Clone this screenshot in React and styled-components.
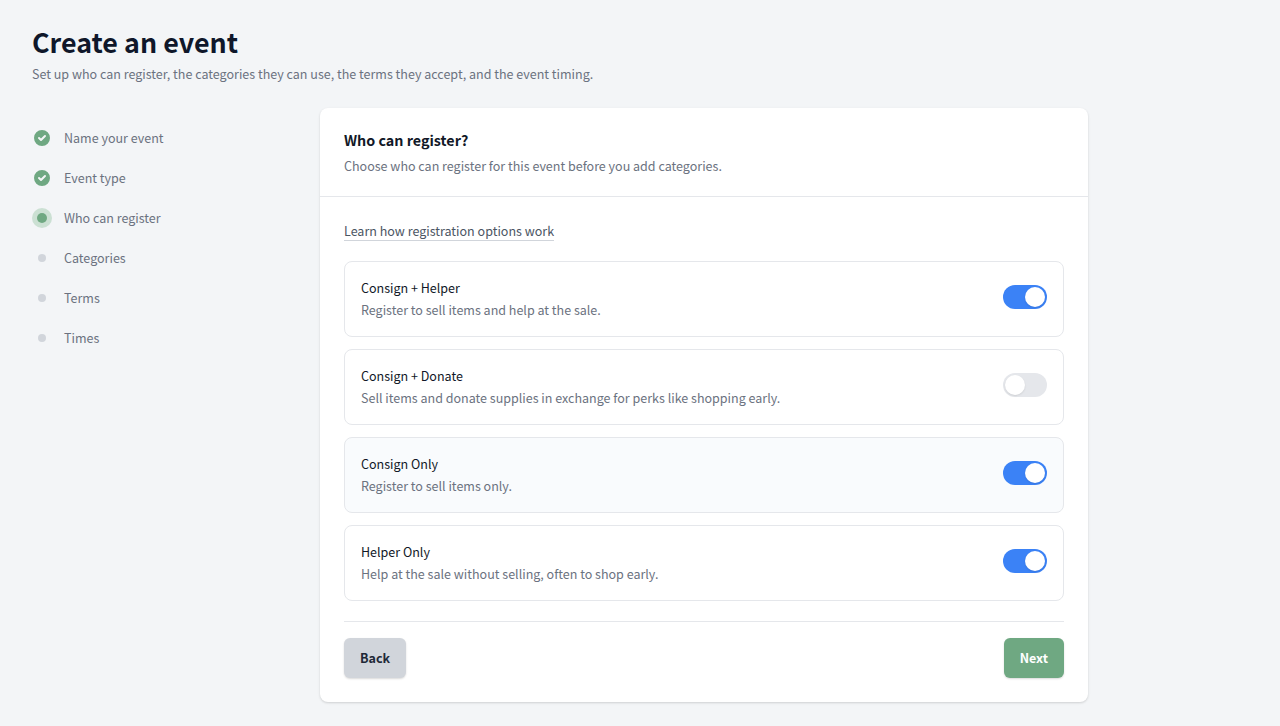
import React, { useState } from "react";
import styled, { createGlobalStyle } from "styled-components";

const GlobalStyle = createGlobalStyle`
  *, *::before, *::after { box-sizing: border-box; }
  body {
    margin: 0;
    background: #f3f5f7;
    color: #111827;
    font-family: "Noto Sans CJK JP", "Noto Sans", sans-serif;
    font-size: 14px;
    font-size-adjust: 0.486;
    line-height: 20px;
  }
  h1, h2, p, ol { margin: 0; padding: 0; }
  button { font: inherit; font-size-adjust: inherit; }
`;

const Page = styled.main`
  padding: 24px 32px;
`;

const Title = styled.h1`
  font-size: 30px;
  line-height: 36px;
  font-weight: 700;
  color: #0f172a;
`;

const Muted = styled.p`
  margin-top: 4px;
  color: #6b7280;
`;

const Layout = styled.div`
  display: grid;
  grid-template-columns: 256px minmax(0, 768px);
  gap: 32px;
  margin-top: 24px;
`;

const Steps = styled.ol`
  display: flex;
  flex-direction: column;
  gap: 20px;
  padding-top: 20px;
  list-style: none;
`;

const Step = styled.li`
  display: flex;
  align-items: center;
  gap: 12px;
  color: #6b7280;
`;

const Marker = styled.svg`
  flex: none;
  width: 20px;
  height: 20px;
`;

const Card = styled.section`
  background: #fff;
  border-radius: 8px;
  box-shadow: 0 1px 3px rgba(0, 0, 0, 0.1), 0 1px 2px rgba(0, 0, 0, 0.06);
`;

const CardHeader = styled.header`
  padding: 20px 24px;
  border-bottom: 1px solid #e5e7eb;
`;

const CardTitle = styled.h2`
  font-size: 16px;
  line-height: 24px;
  font-weight: 600;
`;

const CardBody = styled.div`
  display: flex;
  flex-direction: column;
  gap: 20px;
  padding: 24px;
`;

const HelpLink = styled.a`
  align-self: flex-start;
  height: 20px;
  color: #4b5563;
  border-bottom: 1px solid #d1d5db;
  text-decoration: none;
`;

const Options = styled.div`
  display: flex;
  flex-direction: column;
  gap: 12px;
`;

const Option = styled.label`
  display: flex;
  align-items: flex-start;
  justify-content: space-between;
  gap: 16px;
  padding: 16px;
  border: 1px solid #e5e7eb;
  border-radius: 8px;
  background: ${({ $active }) => ($active ? "#f9fbfd" : "#fff")};
  cursor: pointer;
`;

const OptionName = styled.span`
  display: block;
  color: #111827;
`;

const OptionNote = styled.span`
  display: block;
  margin-top: 2px;
  color: #6b7280;
`;

const Switch = styled.input`
  appearance: none;
  flex: none;
  width: 44px;
  height: 24px;
  margin: 7px 0 0;
  padding: 2px;
  border-radius: 12px;
  background: #e5e7eb;
  cursor: pointer;

  &::before {
    content: "";
    display: block;
    width: 20px;
    height: 20px;
    border-radius: 50%;
    background: #fff;
    box-shadow: 0 1px 2px rgba(0, 0, 0, 0.1);
  }
  &:checked { background: #3b82f6; }
  &:checked::before { margin-left: 20px; }
`;

const Footer = styled.footer`
  display: flex;
  justify-content: space-between;
  padding-top: 16px;
  border-top: 1px solid #e5e7eb;
`;

const Button = styled.button`
  height: 40px;
  padding: 0 16px;
  border: 0;
  border-radius: 6px;
  font-weight: 600;
  color: ${({ $primary }) => ($primary ? "#fff" : "#1f2937")};
  background: ${({ $primary }) => ($primary ? "#6fa882" : "#d1d5db")};
  box-shadow: 0 1px 2px rgba(0, 0, 0, 0.15);
  cursor: pointer;
`;

const STEPS = [
  ["Name your event", "done"],
  ["Event type", "done"],
  ["Who can register", "current"],
  ["Categories", "todo"],
  ["Terms", "todo"],
  ["Times", "todo"],
];

const OPTIONS = [
  { id: "consign-helper", name: "Consign + Helper", note: "Register to sell items and help at the sale.", on: true },
  { id: "consign-donate", name: "Consign + Donate", note: "Sell items and donate supplies in exchange for perks like shopping early.", on: false },
  { id: "consign-only", name: "Consign Only", note: "Register to sell items only.", on: true, active: true },
  { id: "helper-only", name: "Helper Only", note: "Help at the sale without selling, often to shop early.", on: true },
];

function StepMarker({ state }) {
  return (
    <Marker viewBox="0 0 20 20" aria-hidden="true">
      {state === "done" && (
        <path
          fill="#6fa882"
          fillRule="evenodd"
          d="M10 18a8 8 0 100-16 8 8 0 000 16zm3.707-9.293a1 1 0 00-1.414-1.414L9 10.586 7.707 9.293a1 1 0 00-1.414 1.414l2 2a1 1 0 001.414 0l4-4z"
        />
      )}
      {state === "current" && (
        <>
          <circle cx="10" cy="10" r="10" fill="#cbe0d3" />
          <circle cx="10" cy="10" r="5" fill="#6fa882" />
        </>
      )}
      {state === "todo" && <circle cx="10" cy="10" r="4" fill="#d1d5db" />}
    </Marker>
  );
}

function OptionRow({ option }) {
  const [on, setOn] = useState(option.on);
  return (
    <Option htmlFor={option.id} $active={option.active}>
      <span>
        <OptionName>{option.name}</OptionName>
        <OptionNote>{option.note}</OptionNote>
      </span>
      <Switch type="checkbox" role="switch" id={option.id} checked={on} onChange={() => setOn(!on)} />
    </Option>
  );
}

export default function App() {
  return (
    <Page>
      <GlobalStyle />
      <Title>Create an event</Title>
      <Muted>
        Set up who can register, the categories they can use, the terms they accept, and the event timing.
      </Muted>
      <Layout>
        <nav aria-label="Progress">
          <Steps>
            {STEPS.map(([label, state]) => (
              <Step key={label} aria-current={state === "current" ? "step" : undefined}>
                <StepMarker state={state} />
                {label}
              </Step>
            ))}
          </Steps>
        </nav>
        <Card>
          <CardHeader>
            <CardTitle>Who can register?</CardTitle>
            <Muted>Choose who can register for this event before you add categories.</Muted>
          </CardHeader>
          <CardBody>
            <HelpLink href="#help">Learn how registration options work</HelpLink>
            <Options>
              {OPTIONS.map((option) => (
                <OptionRow key={option.id} option={option} />
              ))}
            </Options>
            <Footer>
              <Button type="button">Back</Button>
              <Button type="button" $primary>Next</Button>
            </Footer>
          </CardBody>
        </Card>
      </Layout>
    </Page>
  );
}
